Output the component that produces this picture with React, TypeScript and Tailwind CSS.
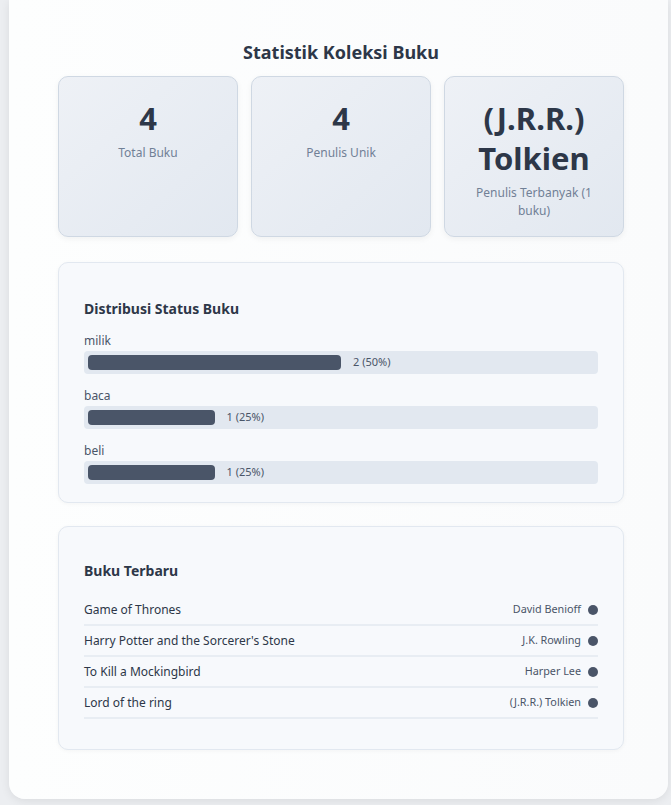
import React from 'react';

const stats = [
  { value: '4', label: 'Total Buku' },
  { value: '4', label: 'Penulis Unik' },
  { value: '(J.R.R.) Tolkien', label: 'Penulis Terbanyak (1 buku)' },
];

const statuses = [
  { name: 'milik', count: 2, pct: 50 },
  { name: 'baca', count: 1, pct: 25 },
  { name: 'beli', count: 1, pct: 25 },
];

const books = [
  { title: 'Game of Thrones', author: 'David Benioff' },
  { title: "Harry Potter and the Sorcerer's Stone", author: 'J.K. Rowling' },
  { title: 'To Kill a Mockingbird', author: 'Harper Lee' },
  { title: 'Lord of the ring', author: '(J.R.R.) Tolkien' },
];

export default function App() {
  return (
    <div
      className="min-h-[805px] bg-[#eceef1] pb-[7px]"
      style={{ fontFamily: '"Noto Sans", "Open Sans", sans-serif' }}
    >
      <div className="ml-[9px] w-[659px] rounded-b-2xl bg-gradient-to-r from-[#fdfefe] to-[#fafbfc] pb-[49px] pt-[39px] shadow-[0_2px_10px_rgba(0,0,0,0.08)]">
        <div className="ml-[49px] w-[566px]">
          {/* Header */}
          <h2 className="mb-[11px] text-center text-[18px] font-bold leading-[26px] text-[#2d3748]">
            Statistik Koleksi Buku
          </h2>

          {/* Stat cards */}
          <div className="grid grid-cols-3 gap-[13px]">
            {stats.map((s, i) => (
              <div
                key={i}
                className="rounded-[10px] border border-[#cfd8e3] bg-gradient-to-br from-[#eef1f6] to-[#e2e8f0] px-4 pb-[16px] pt-[21px] text-center shadow-[0_2px_6px_rgba(0,0,0,0.05)]"
              >
                <div className="text-[31px] font-bold leading-[40px] text-[#2d3748]">
                  {s.value}
                </div>
                <div className="mt-[6px] text-[12px] leading-[18px] text-[#718096]">
                  {s.label}
                </div>
              </div>
            ))}
          </div>

          {/* Status distribution */}
          <div className="mt-[25px] rounded-[10px] border border-[#e2e8f0] bg-[#f7f9fc] px-[25px] pb-[18px] pt-[36px] shadow-[0_1px_4px_rgba(0,0,0,0.04)]">
            <h3 className="mb-[14px] text-[14px] font-bold leading-[20px] text-[#2d3748]">
              Distribusi Status Buku
            </h3>
            <div className="flex flex-col gap-[14px]">
              {statuses.map((st) => (
                <div key={st.name}>
                  <div className="mb-[2px] text-[12px] leading-[16px] text-[#4a5568]">
                    {st.name}
                  </div>
                  <div className="flex h-[23px] items-center rounded-[4px] bg-[#e2e8f0] px-[4px]">
                    <div className="flex flex-1 items-center">
                      <div
                        className="h-[15px] rounded-[4px] bg-[#4a5568]"
                        style={{ width: `${st.pct}%` }}
                      />
                      <span className="ml-[12px] text-[11px] text-[#4a5568]">
                        {st.count} ({st.pct}%)
                      </span>
                    </div>
                  </div>
                </div>
              ))}
            </div>
          </div>

          {/* Recent books */}
          <div className="mt-[23px] rounded-[10px] border border-[#e2e8f0] bg-[#f7f9fc] px-[25px] pb-[30px] pt-[34px] shadow-[0_1px_4px_rgba(0,0,0,0.04)]">
            <h3 className="mb-[14px] text-[14px] font-bold leading-[20px] text-[#2d3748]">
              Buku Terbaru
            </h3>
            <ul>
              {books.map((b) => (
                <li
                  key={b.title}
                  className="flex h-[31px] items-center justify-between border-b-2 border-[#e8edf3]"
                >
                  <span className="text-[12px] text-[#2d3748]">{b.title}</span>
                  <span className="flex items-center gap-[7px] text-[10.8px] text-[#4a5568]">
                    {b.author}
                    <span className="h-[10px] w-[10px] rounded-full bg-[#4a5568]" />
                  </span>
                </li>
              ))}
            </ul>
          </div>
        </div>
      </div>
    </div>
  );
}
